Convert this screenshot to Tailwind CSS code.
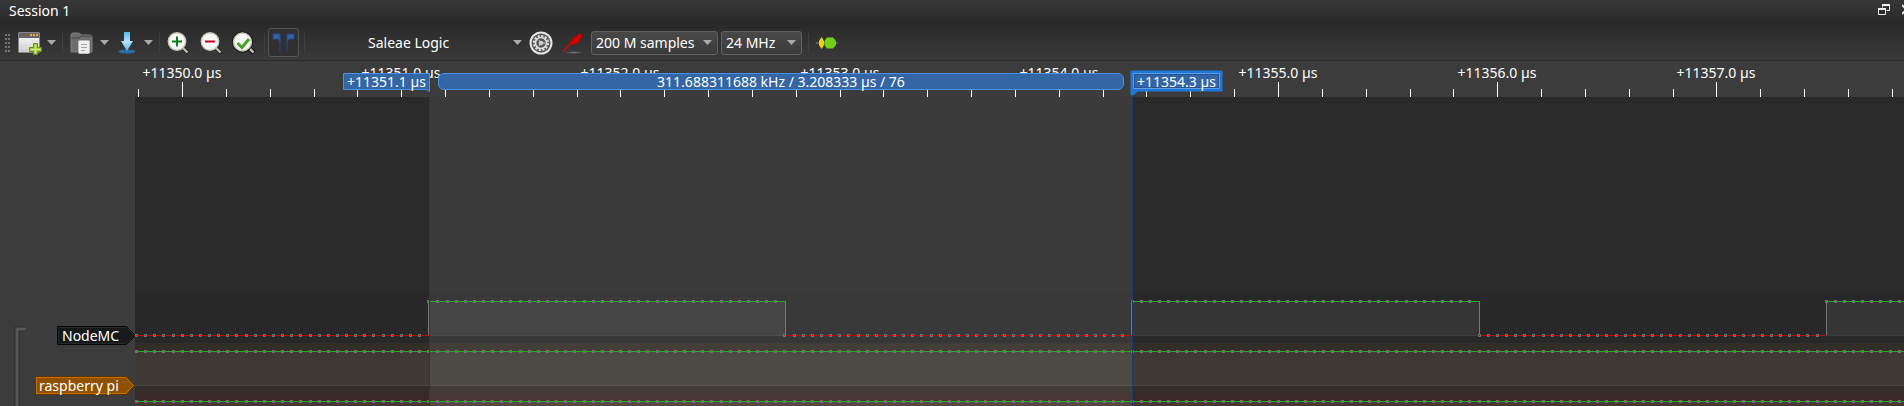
<!DOCTYPE html>
<html lang="en">
<head>
<meta charset="utf-8">
<title>Session 1</title>
<script src="https://cdn.jsdelivr.net/npm/@tailwindcss/browser@4"></script>
</head>
<body class="flex min-h-screen flex-col overflow-x-hidden bg-[#3c3c3c] font-['Noto_Sans',sans-serif] text-sm text-white">
  <header class="flex h-[22px] items-center justify-between bg-linear-to-b from-[#373737] to-[#2b2b2b] pl-[9px]">
    <h1 class="pb-px leading-5">Session 1</h1>
    <div class="flex gap-3 overflow-hidden pb-[3px]">
      <button aria-label="Float" class="size-3"><svg viewBox="0 0 12 12" class="size-3" fill="none" stroke="#eee" stroke-width="1"><path d="M4.500 3.500V.5h7v6h-3"/><path d="M4 1h8" stroke-width="2"/><path d="M.5 4.500h7v6h-7z" fill="#2b2b2b"/><path d="M0 5h8" stroke-width="2"/></svg></button>
      <button aria-label="Close" class="w-[2px] overflow-hidden"><svg width="10" height="12" viewBox="0 0 10 12" fill="none" stroke="#ddd" stroke-width="2"><path d="M0 1l9 9M9 1l-9 9"/></svg></button>
    </div>
  </header>

  <nav aria-label="Main toolbar" class="flex h-[39px] items-center border-t border-b border-t-[#252525] border-b-[#2a2a2a] bg-linear-to-b from-[#292929] to-[#3a3a3a] pt-[2px] pl-[5px]">
    <svg width="6" height="18" fill="#777" class="mr-[7px] shrink-0"><path d="M0 0h2v2h-2zM3 0h2v2h-2zM0 4h2v2h-2zM3 4h2v2h-2zM0 8h2v2h-2zM3 8h2v2h-2zM0 12h2v2h-2zM3 12h2v2h-2zM0 16h2v2h-2zM3 16h2v2h-2z"/></svg>
    <button aria-label="New session" class="mr-[5px] shrink-0"><svg width="24" height="24" viewBox="0 0 24 24"><defs><linearGradient id="win" x2="0" y2="1"><stop stop-color="#fff"/><stop offset="1" stop-color="#ccc"/></linearGradient></defs><rect x=".5" y="1.500" width="21" height="20" rx="1" fill="url(#win)" stroke="#888"/><path d="M1 2h20v5H1z" fill="#666"/><path d="M12 3h2v2h-2zM15 3h2v2h-2zM18 3h2v2h-2z" fill="#f5a742"/><path d="M15.500 12.500h4v4h4v4h-4v3h-4v-3h-4v-4h4z" fill="#a9cf45" stroke="#6b8b1c"/><path d="M17.500 14v8M13 18.500h9" stroke="#cfe68a"/></svg></button>
    <button aria-label="New session options" class="mr-[6px] shrink-0"><svg width="9" height="5"><path d="M0 0h9L4.500 5z" fill="#aaa"/></svg></button>
    <i class="mr-[7px] h-5 w-px shrink-0 bg-[#404040]"></i>
    <button aria-label="Open" class="mr-[6px] shrink-0"><svg width="24" height="24" viewBox="0 0 24 24"><path d="M1 4q0-2 2-2h5q2 0 3 2h9q2 0 2 2v15H1z" fill="#6d6d6d" stroke="#808080"/><path d="M1 7h8l2-2h11" fill="none" stroke="#444"/><rect x="8.500" y="9.500" width="11" height="13" rx="1" fill="#eee" stroke="#bbb"/><path d="M11 13.500h6M11 16.500h6M11 19.500h4" stroke="#a9a297"/></svg></button>
    <button aria-label="Open options" class="mr-[9px] shrink-0"><svg width="9" height="5"><path d="M0 0h9L4.500 5z" fill="#aaa"/></svg></button>
    <button aria-label="Save" class="mr-[8px] shrink-0"><svg width="18" height="24" viewBox="0 0 18 24"><defs><linearGradient id="dl" x2="0" y2="1"><stop stop-color="#5bb8ef"/><stop offset=".5" stop-color="#b2e2ff"/><stop offset="1" stop-color="#58b6ed"/></linearGradient></defs><ellipse cx="9" cy="20.500" rx="8.500" ry="2" fill="#2b719f"/><path d="M6 1h6v9h3L9 20 3 10h3z" fill="url(#dl)"/></svg></button>
    <button aria-label="Save options" class="mr-[6px] shrink-0"><svg width="9" height="5"><path d="M0 0h9L4.500 5z" fill="#aaa"/></svg></button>
    <i class="mr-[7px] h-5 w-px shrink-0 bg-[#404040]"></i>
    <button aria-label="Zoom in" class="mr-[9px] shrink-0"><svg width="24" height="24" viewBox="0 0 24 24"><path d="M15 16l6 6" stroke="#222" stroke-width="4"/><path d="M15 16l5.500 5.500" stroke="#bcb9ad" stroke-width="2.400"/><circle cx="10" cy="10.500" r="8.700" fill="#f7f7f5" stroke="#c9c5b8" stroke-width="1.400"/><path d="M10 5.500v10M5 10.500h10" stroke="#0a7f1e" stroke-width="2"/></svg></button>
    <button aria-label="Zoom out" class="mr-[8px] shrink-0"><svg width="24" height="24" viewBox="0 0 24 24"><path d="M15 16l6 6" stroke="#222" stroke-width="4"/><path d="M15 16l5.500 5.500" stroke="#bcb9ad" stroke-width="2.400"/><circle cx="10" cy="10.500" r="8.700" fill="#f7f7f5" stroke="#c9c5b8" stroke-width="1.400"/><path d="M5 10.500h10" stroke="#c4001f" stroke-width="2"/></svg></button>
    <button aria-label="Zoom to fit" class="mr-[8px] shrink-0"><svg width="24" height="24" viewBox="0 0 24 24"><path d="M16 16l6 6" stroke="#111" stroke-width="5"/><path d="M16 16l5.500 5.500" stroke="#bcb9ad" stroke-width="2.600"/><circle cx="10.500" cy="11" r="10.500" fill="#111"/><circle cx="10.500" cy="11" r="9" fill="#f7f7f5" stroke="#c9c5b8" stroke-width="1.400"/><path d="M5.500 12l4.500 4.500 7-8.500" fill="none" stroke="#43a524" stroke-width="3"/></svg></button>
    <i class="mr-[3px] h-5 w-px shrink-0 bg-[#404040]"></i>
    <button aria-label="Show cursors" aria-pressed="true" class="mr-[5px] flex h-[29px] w-[31px] shrink-0 items-center justify-center rounded-[3px] border border-[#555] bg-[#303030]"><svg width="23" height="20" viewBox="0 0 23 20"><path d="M1 1h7v18" fill="none" stroke="#204a87"/><path d="M1 1h7v8L6 6H1z" fill="#3465a4" stroke="#204a87"/><path d="M15 19V1h7v5h-5l-2 3" fill="#3465a4" stroke="#204a87"/></svg></button>
    <i class="h-5 w-px shrink-0 bg-[#404040]"></i>
    <label class="relative flex h-6 w-[221px] shrink-0 items-center"><span class="sr-only">Device</span>
      <select class="h-6 w-full appearance-none bg-transparent pl-[63px] text-sm leading-6 outline-none"><option>Saleae Logic</option></select>
      <svg width="9" height="5" class="pointer-events-none absolute right-1"><path d="M0 0h9L4.500 5z" fill="#aaa"/></svg>
    </label>
    <button aria-label="Configure device" class="mr-[9px] ml-[3px] shrink-0"><svg width="24" height="24" viewBox="0 0 24 24" fill="none"><circle cx="12" cy="12" r="11.500" fill="#e4e4e4"/><circle cx="12" cy="12" r="9.500" fill="#555"/><circle cx="12" cy="12" r="7" stroke="#ddd" stroke-width="2.200" stroke-dasharray="2.200 1.465"/><circle cx="12" cy="12" r="5.500" stroke="#ddd" stroke-width="1.600"/><circle cx="12" cy="12" r="2.300" fill="#ccc"/><path d="M12 12l-2-3M12 12l-2 3M12 12h4" stroke="#ccc"/></svg></button>
    <button aria-label="Configure channels" class="mr-[7px] shrink-0"><svg width="22" height="24" viewBox="0 0 22 24"><defs><radialGradient id="shade"><stop stop-color="#777"/><stop offset="1" stop-color="#777" stop-opacity="0"/></radialGradient></defs><ellipse cx="12" cy="21.500" rx="10" ry="1.500" fill="url(#shade)"/><path d="M1 20.500L10 11" stroke="#e00000" stroke-width="1.600"/><path d="M8.500 10l1.500-1 3-4 2 .5 1.500-3 3.500 1-.5 3-2 1.500 1 1-4.500 4-2 .5-1-.5-1.500.5z" fill="#d40000" stroke="#9d0000" stroke-width=".6"/></svg></button>
    <label class="relative mr-[3px] flex h-6 w-[127px] shrink-0 items-center"><span class="sr-only">Sample count</span>
      <select class="h-6 w-full appearance-none rounded-[3px] border border-[#626262] bg-linear-to-b from-[#484848] to-[#3b3b3b] pl-1 text-sm leading-5 outline-none"><option>200 M samples</option></select>
      <svg width="9" height="5" class="pointer-events-none absolute right-[6px]"><path d="M0 0h9L4.500 5z" fill="#aaa"/></svg>
    </label>
    <label class="relative flex h-6 w-[81px] shrink-0 items-center"><span class="sr-only">Sample rate</span>
      <select class="h-6 w-full appearance-none rounded-[3px] border border-[#626262] bg-linear-to-b from-[#484848] to-[#3b3b3b] pl-1 text-sm leading-5 outline-none"><option>24 MHz</option></select>
      <svg width="9" height="5" class="pointer-events-none absolute right-[6px]"><path d="M0 0h9L4.500 5z" fill="#aaa"/></svg>
    </label>
    <i class="mr-[7px] ml-[6px] h-5 w-px shrink-0 bg-[#404040]"></i>
    <button aria-label="Add protocol decoder" class="shrink-0"><svg width="22" height="12" viewBox="0 0 22 12"><path d="M0 6h22" stroke="#888"/><path d="M5.500 0L8 4v4l-2.500 4L3 8V4z" fill="#edd400"/><path d="M11 .5h6l3 3.500v4l-3 3.500h-6L8.500 8V4z" fill="#73d216"/></svg></button>
  </nav>

  <main class="flex flex-1">
    <aside aria-label="Signals" class="flex w-[135px] shrink-0 pt-[265px]">
      <svg width="13" height="80" fill="none" class="mr-[8px] ml-[14px] shrink-0"><path d="M12 3H3v80" stroke="#2f2f2f" stroke-width="5"/><path d="M12 3H3v80" stroke="#555753" stroke-width="3"/></svg>
      <div class="flex flex-1 flex-col items-end gap-[31px]">
        <div class="grid h-[19px] w-[79px] items-center">
          <svg width="79" height="19" class="col-start-1 row-start-1"><path d="M.5.500h69l9 9-9 9H.5z" fill="#16191a" stroke="#060808"/><path d="M1.500 1.500h68l8 8-8 8h-68z" fill="none" stroke="#242829"/></svg>
          <span class="col-start-1 row-start-1 pl-[5px] leading-[18px]">NodeMC</span>
        </div>
        <div class="mr-px grid h-[19px] w-[100px] items-center">
          <svg width="100" height="19" class="col-start-1 row-start-1"><path d="M.5.500h91l8 9-8 9H.5z" fill="#8f5000" stroke="#5c3300"/><path d="M1.500 1.500h89l8 8-8 8h-89z" fill="none" stroke="#c87000"/></svg>
          <span class="col-start-1 row-start-1 pl-1 leading-[18px]">raspberry pi</span>
        </div>
      </div>
    </aside>

    <section aria-label="Timeline" class="relative flex min-w-0 flex-1 flex-col overflow-hidden">
      <div id="ruler" class="relative h-9"></div>
      <svg class="min-h-[309px] w-full flex-1" shape-rendering="crispEdges">
        <rect width="100%" height="100%" fill="#2a2a2a"/>
        <rect y="196" width="100%" height="50" fill="#282828"/>
        <g fill="#363636"><path d="M294 205h357v33H294zM997 205h347v33H997z"/><rect x="1691" y="205" width="100%" height="33"/></g>
        <rect y="238" width="100%" height="1" fill="#3e3e3e"/>
        <rect y="246" width="100%" height="63" fill="#332d28"/>
        <rect y="254" width="100%" height="34" fill="#3e3a33"/>
        <rect y="288" width="100%" height="1" fill="#4a4744"/>
        <rect y="296" width="100%" height="13" fill="#3a2728"/>
        <rect y="305" width="100%" height="4" fill="#473835"/>
        <rect x="295" width="702" height="100%" fill="#fff" fill-opacity=".08"/>
        <g fill="#c00808"><path d="M0 238h294v1H0zM651 238h346v1H651zM1344 238h347v1h-347z"/></g>
        <g fill="#777"><path d="M293 204h1v34h-1zM650 204h1v34h-1zM996 204h1v34h-1zM1344 204h1v34h-1zM1691 204h1v34h-1z"/></g>
        <g fill="#16b816"><path d="M294 204h357v1H294zM997 204h348v1H997z"/><rect x="1691" y="204" width="100%" height="1"/><rect y="254" width="100%" height="1"/><rect y="304" width="100%" height="1"/></g>
        <path id="samples" fill="#707070" fill-rule="evenodd"/>
        <path d="M294 0h1v309h-1zM997 0h1v309h-1z" fill="#1d3a66"/>
      </svg>

      <div class="absolute top-3 left-[208px] grid h-5 w-[87px]">
        <svg width="87" height="20" class="col-start-1 row-start-1"><path d="M.5.500h86v18l-3-2H.5z" fill="#3465a4" stroke="#4a90ec"/></svg>
        <span class="col-start-1 row-start-1 text-center leading-[18px]">+11351.1 µs</span>
      </div>
      <div class="absolute top-3 left-[303px] h-[17px] w-[686px] rounded-md border border-[#4a90ec] bg-[#3465a4] text-center leading-4">311.688311688 kHz / 3.208333 µs / 76</div>
      <div class="absolute top-[9px] left-[995px] grid h-[26px] w-[93px]">
        <svg width="93" height="26" class="col-start-1 row-start-1"><path d="M2 2h89v18H7l-4 4H2z" fill="#3465a4" stroke="#1f78d8" stroke-width="3" stroke-linejoin="round"/><path d="M4 4h85v14H4z" fill="none" stroke="#1c447c"/><path d="M3.500 3.500h86v15h-86z" fill="none" stroke="#5a9bea"/></svg>
        <span class="col-start-1 row-start-1 text-center leading-6">+11354.3 µs</span>
      </div>
    </section>
  </main>

<script>
  const US = 219.2, ORIGIN = 47;
  const ruler = document.getElementById('ruler');
  for (let i = -1; i < 40; i++) {
    const tick = document.createElement('i');
    const major = i % 5 === 0;
    tick.className = major ? 'absolute bottom-0 h-[15px] w-px bg-white' : 'absolute bottom-0 h-2 w-px bg-white';
    tick.style.left = Math.round(ORIGIN + i * US / 5) + 'px';
    ruler.append(tick);
    if (major) {
      const label = document.createElement('span');
      label.className = 'absolute top-[2px] -translate-x-1/2 whitespace-nowrap leading-5';
      label.style.left = Math.round(ORIGIN + i * US / 5) + 'px';
      label.textContent = '+' + (11350 + i / 5) + '.0 µs';
      ruler.append(label);
    }
  }

  // One marker per captured sample: hollow when the line is low, solid when high.
  let d = '';
  for (let k = 0; k < 200; k++) {
    const x = Math.round(k * US / 24);
    const high = (k >= 32 && k < 71) || (k >= 109 && k < 147) || k >= 185;
    d += `M${x} ${high ? 203 : 237}h3v3h-3z`;
    if (!high) d += `M${x + 1} 238h1v1h-1z`;
    d += `M${x} 253h3v3h-3zM${x} 303h3v3h-3z`;
  }
  document.getElementById('samples').setAttribute('d', d);
</script>
</body>
</html>
